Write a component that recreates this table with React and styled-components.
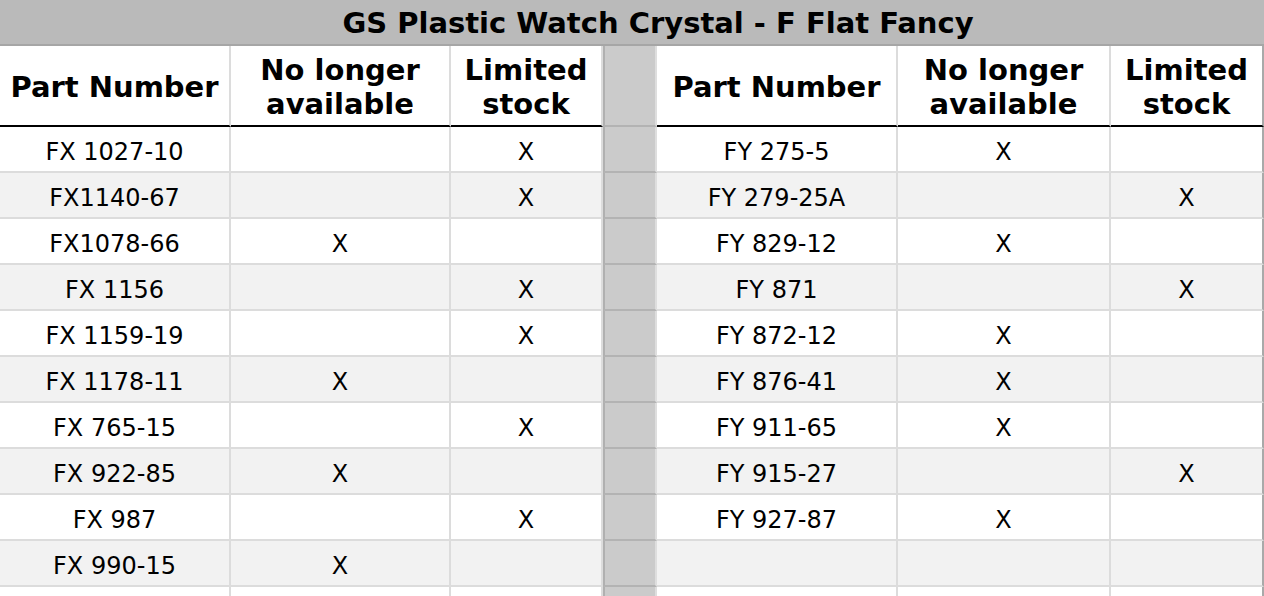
import React from 'react';
import styled, {createGlobalStyle} from 'styled-components';

const GlobalStyle = createGlobalStyle`
  html, body {
    margin: 0;
    padding: 0;
    background: #fff;
  }
`

const Table = styled.table`
  width: 1264px;
  table-layout: fixed;
  border-collapse: separate;
  border-spacing: 0;
  font-family: "DejaVu Sans", Verdana, sans-serif;
  color: #000;
`

const Col = styled.col`
  width: ${({$w}) => $w}px;
`

const Title = styled.th`
  height: 43px;
  padding: 1px 0 0 52px;
  background: #bababa;
  border-bottom: 2px solid #a6a6a6;
  font-size: 29px;
  font-weight: bold;
  text-align: center;
  vertical-align: middle;
`

const HeadCell = styled.th`
  height: 76px;
  padding: 3px 4px 0;
  background: #fff;
  border-bottom: 2px solid #000;
  border-right: ${({$last}) => $last ? '2px solid #a9a9a9' : '2px solid #dcdcdc'};
  font-size: 29px;
  line-height: 34px;
  font-weight: bold;
  text-align: center;
  vertical-align: middle;
`

const Cell = styled.td`
  height: 39px;
  padding: 5px 0 0;
  background: ${({$odd}) => $odd ? '#f2f2f2' : '#fff'};
  border-bottom: 2px solid #dcdcdc;
  border-right: ${({$last}) => $last ? '2px solid #a9a9a9' : '2px solid #dcdcdc'};
  font-size: 24px;
  text-align: center;
  vertical-align: middle;
`

const Spacer = styled.td`
  padding: 0;
  background: #cbcbcb;
  border-left: 2px solid #b0b0b0;
  border-right: 2px solid #dedede;
  border-bottom: 2px solid #b3b3b3;
`

const widths = [231, 220, 152, 54, 241, 213, 153]

const left = [
	['FX 1027-10', '', 'X'],
	['FX1140-67', '', 'X'],
	['FX1078-66', 'X', ''],
	['FX 1156', '', 'X'],
	['FX 1159-19', '', 'X'],
	['FX 1178-11', 'X', ''],
	['FX 765-15', '', 'X'],
	['FX 922-85', 'X', ''],
	['FX 987', '', 'X'],
	['FX 990-15', 'X', ''],
	['', '', ''],
]

const right = [
	['FY 275-5', 'X', ''],
	['FY 279-25A', '', 'X'],
	['FY 829-12', 'X', ''],
	['FY 871', '', 'X'],
	['FY 872-12', 'X', ''],
	['FY 876-41', 'X', ''],
	['FY 911-65', 'X', ''],
	['FY 915-27', '', 'X'],
	['FY 927-87', 'X', ''],
	['', '', ''],
	['', '', ''],
]

const App = () => {
	return (
		<>
			<GlobalStyle/>
			<Table>
				<colgroup>
					{widths.map((w, i) => <Col key={i} $w={w}/>)}
				</colgroup>
				<thead>
					<tr>
						<Title colSpan={7}>GS Plastic Watch Crystal - F Flat Fancy</Title>
					</tr>
					<tr>
						<HeadCell>Part Number</HeadCell>
						<HeadCell>No longer available</HeadCell>
						<HeadCell>Limited stock</HeadCell>
						<Spacer/>
						<HeadCell>Part Number</HeadCell>
						<HeadCell>No longer available</HeadCell>
						<HeadCell $last>Limited stock</HeadCell>
					</tr>
				</thead>
				<tbody>
					{left.map((row, i) => (
						<tr key={i}>
							{row.map((v, j) => (
								<Cell key={'l' + j} $odd={i % 2 === 1}>{v}</Cell>
							))}
							<Spacer/>
							{right[i].map((v, j) => (
								<Cell key={'r' + j} $odd={i % 2 === 1} $last={j === 2}>{v}</Cell>
							))}
						</tr>
					))}
				</tbody>
			</Table>
		</>
	);
};

export default App;
